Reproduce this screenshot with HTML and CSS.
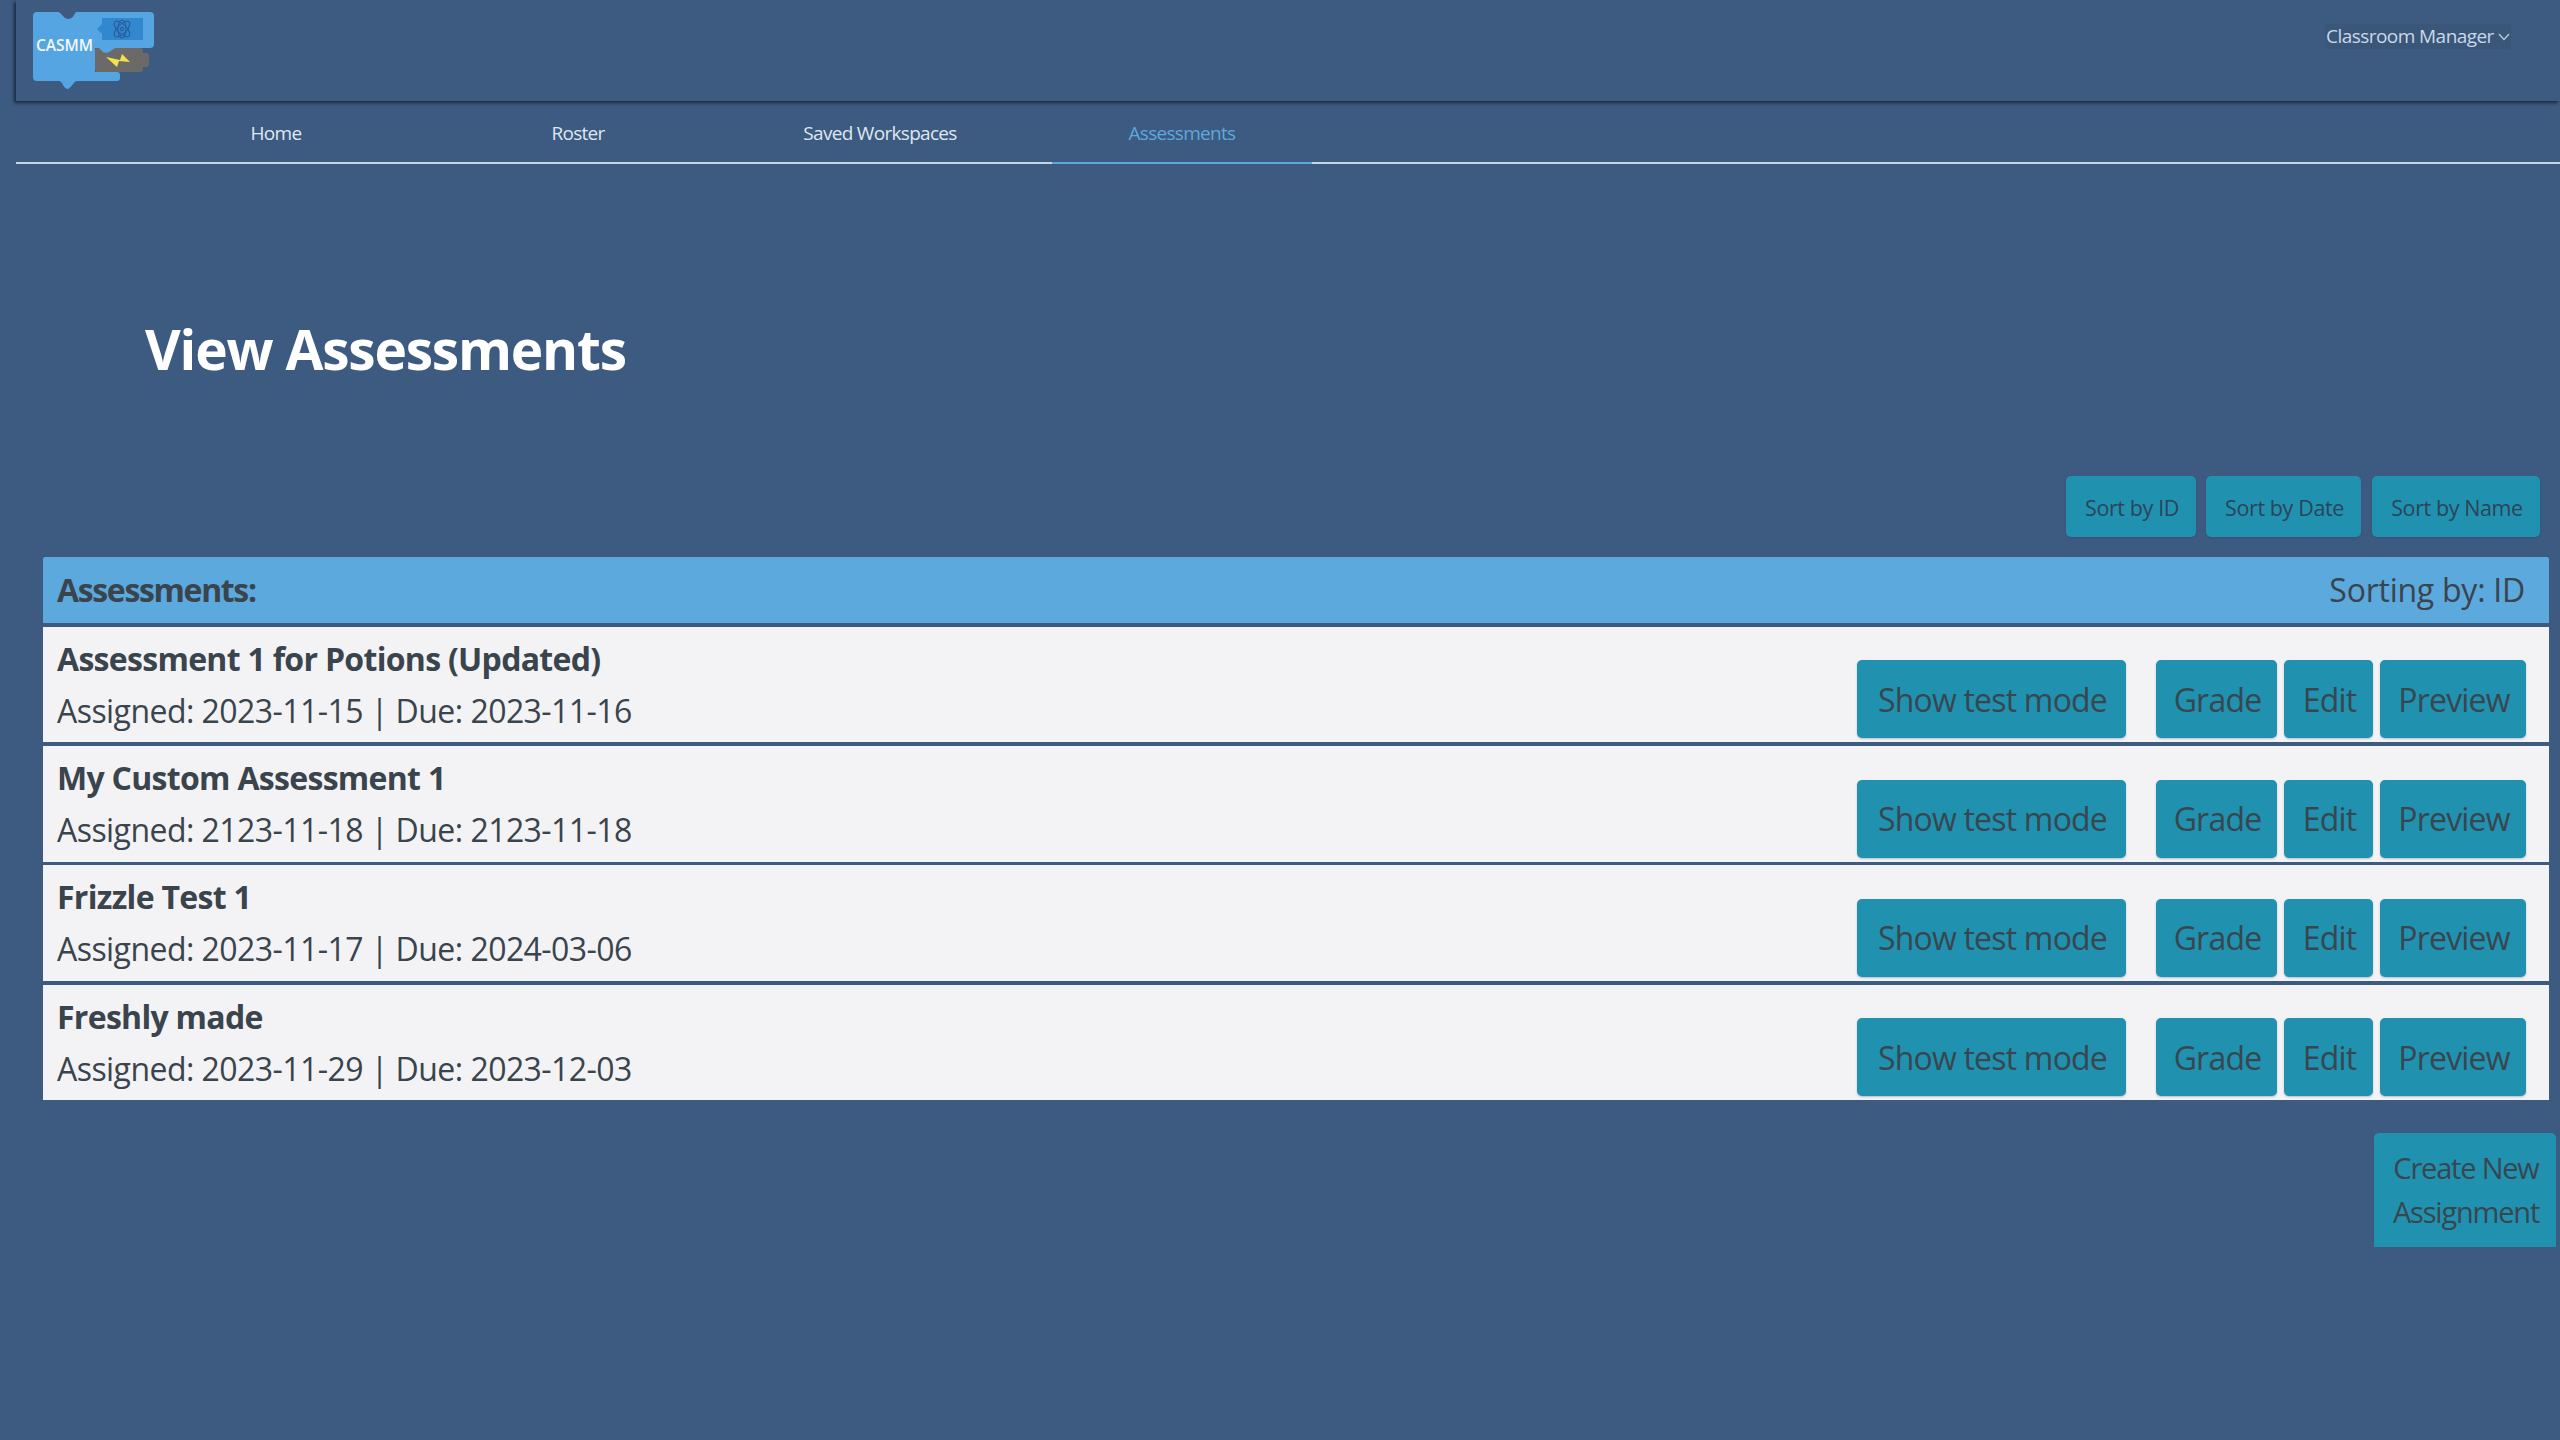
FILE: index.html
```html
<!DOCTYPE html>
<html lang="en">
<head>
<meta charset="utf-8">
<title>View Assessments</title>
<link rel="stylesheet" href="styles.css">
</head>
<body>
<div class="page">
  <header class="topbar">
    <svg class="logo" width="125" height="80" viewBox="33 11 125 80" aria-label="CASMM logo">
      <path class="gray" d="M98 48h42q3 0 3 3v2h3q3 0 3 3v8q0 3-3 3h-3v2q0 3-3 3H98q-3 0-3-3V51q0-3 3-3z"/>
      <path class="blue" d="M37 12h21q2 0 4 3t6 4q4 0 6-4t4-3h72q4 0 4 4v28q0 4-4 4H116q-2 0-4 2t-6 3q-3 0-5-3t-4-2h-2V72H117q3 0 3 3v3q0 3-3 3H77q-2 0-4 3t-5 5q-3 0-5-4t-4-4H37q-4 0-4-4V16q0-4 4-4z"/>
      <path class="inner" d="M102 18h41v22h-41v-6l-5-5 5-5z"/>
      <g class="atom">
        <ellipse cx="122" cy="29" rx="10" ry="4.5" transform="rotate(45 122 29)"/>
        <ellipse cx="122" cy="29" rx="10" ry="4.5" transform="rotate(-45 122 29)"/>
        <ellipse cx="122" cy="29" rx="4" ry="9"/>
        <circle cx="122" cy="29" r="1.6"/>
      </g>
      <path class="bolt" d="M106 57L120 60 122 54 130 62 119 61 117 67z"/>
      <text class="logo-text" x="36" y="50.5">CASMM</text>
    </svg>
    <button class="user-menu" type="button">
      <span>Classroom Manager</span>
      <svg class="chevron" width="12" height="8" viewBox="0 0 12 8"><path d="M1 1l5 5.5L11 1" fill="none" stroke="#b9cbdf" stroke-width="1.3"/></svg>
    </button>
  </header>
  <nav class="tabs">
    <a class="tab">Home</a>
    <a class="tab">Roster</a>
    <a class="tab">Saved Workspaces</a>
    <a class="tab active">Assessments</a>
  </nav>
  <main class="content">
    <h1 class="title">View Assessments</h1>
    <div class="sort-row">
      <button class="btn sort w-id" type="button">Sort by ID</button>
      <button class="btn sort w-date" type="button">Sort by Date</button>
      <button class="btn sort w-name" type="button">Sort by Name</button>
    </div>
    <section class="list">
      <div class="list-head">
        <strong>Assessments:</strong>
        <span>Sorting by: ID</span>
      </div>
      <article class="item">
        <div class="info">
          <h2>Assessment 1 for Potions (Updated)</h2>
          <p>Assigned: 2023-11-15 | Due: 2023-11-16</p>
        </div>
        <div class="actions">
          <button class="btn w-test" type="button">Show test mode</button>
          <button class="btn w-grade" type="button">Grade</button>
          <button class="btn w-edit" type="button">Edit</button>
          <button class="btn w-prev" type="button">Preview</button>
        </div>
      </article>
      <article class="item">
        <div class="info">
          <h2>My Custom Assessment 1</h2>
          <p>Assigned: 2123-11-18 | Due: 2123-11-18</p>
        </div>
        <div class="actions">
          <button class="btn w-test" type="button">Show test mode</button>
          <button class="btn w-grade" type="button">Grade</button>
          <button class="btn w-edit" type="button">Edit</button>
          <button class="btn w-prev" type="button">Preview</button>
        </div>
      </article>
      <article class="item">
        <div class="info">
          <h2>Frizzle Test 1</h2>
          <p>Assigned: 2023-11-17 | Due: 2024-03-06</p>
        </div>
        <div class="actions">
          <button class="btn w-test" type="button">Show test mode</button>
          <button class="btn w-grade" type="button">Grade</button>
          <button class="btn w-edit" type="button">Edit</button>
          <button class="btn w-prev" type="button">Preview</button>
        </div>
      </article>
      <article class="item">
        <div class="info">
          <h2>Freshly made</h2>
          <p>Assigned: 2023-11-29 | Due: 2023-12-03</p>
        </div>
        <div class="actions">
          <button class="btn w-test" type="button">Show test mode</button>
          <button class="btn w-grade" type="button">Grade</button>
          <button class="btn w-edit" type="button">Edit</button>
          <button class="btn w-prev" type="button">Preview</button>
        </div>
      </article>
    </section>
    <div class="create-row">
      <button class="btn create" type="button">Create New<br>Assignment</button>
    </div>
  </main>
</div>
</body>
</html>
```
FILE: styles.css
```css
* { box-sizing: border-box; }
html, body { margin: 0; height: 100%; }
body {
  background: #3d5a80;
  font-family: "Open Sans", "Noto Sans", sans-serif;
  color: #3a444c;
  overflow: hidden;
}
.page { width: 2560px; height: 1440px; }

.topbar {
  margin-left: 16px;
  height: 101px;
  padding: 12px 49px 0 17px;
  display: flex;
  justify-content: space-between;
  align-items: flex-start;
  box-shadow: -2px 2px 3px #1a2b42;
  background: #3d5a80;
}
.logo { display: block; margin-top: -1px; }
.blue { fill: #55a5e3; }
.gray { fill: #6b6a68; }
.inner { fill: #3288cf; }
.atom { fill: none; stroke: #2a5f9f; stroke-width: 1.2; }
.bolt { fill: #f2e34b; }
.logo-text { fill: #f2f7fb; font: 600 15.5px "Open Sans", sans-serif; }

.user-menu {
  margin-top: 12px;
  width: 186px;
  height: 25px;
  padding: 0 1px;
  display: flex;
  align-items: center;
  justify-content: space-between;
  border: 0;
  background: #3a5679;
  color: #c9d8ea;
  font: 19px/25px "Open Sans", sans-serif;
  letter-spacing: -0.55px;
  white-space: nowrap;
}
.chevron { flex-shrink: 0; }

.tabs {
  margin-left: 16px;
  height: 63px;
  padding-left: 130px;
  display: flex;
  gap: 42px;
  border-bottom: 2px solid #c3d6e6;
}
.tab {
  width: 260px;
  height: 63px;
  display: flex;
  align-items: center;
  justify-content: center;
  color: #dfe8f2;
  font-size: 19px;
  letter-spacing: -0.7px;
}
.tab.active {
  padding-top: 2px;
  color: #5ba9dd;
  border-bottom: 2px solid #5ba9dd;
}

.content { padding: 0 4px 0 43px; }
.title {
  margin: 146px 0 0 102px;
  height: 78px;
  color: #fff;
  font-size: 55px;
  line-height: 78px;
  font-weight: 700;
  letter-spacing: -1.2px;
}

.btn {
  border: 0;
  border-radius: 5px;
  padding: 0 0 0 2px;
  background: #2191b0;
  color: #38474f;
  font-family: inherit;
  font-size: 32px;
  letter-spacing: -0.8px;
  box-shadow: 0 1px 2px rgba(40, 70, 90, 0.3);
}

.sort-row {
  margin: 88px 16px 0 0;
  display: flex;
  justify-content: flex-end;
  height: 61px;
}
.sort { padding-top: 2px; font-size: 21.5px; letter-spacing: -0.4px; color: #2a4557; height: 61px; }
.w-id { width: 130px; }
.w-date { width: 155px; margin-left: 10px; }
.w-name { width: 168px; margin-left: 11px; }

.list { margin: 20px 7px 0 0; display: flex; flex-direction: column; gap: 3.7px; }
.list-head {
  height: 66px;
  padding: 0 24px 2px 14px;
  display: flex;
  justify-content: space-between;
  align-items: center;
  background: #5ba9dd;
  border-radius: 2px 2px 0 0;
  font-size: 32px;
  letter-spacing: -0.25px;
}
.list-head strong { font-weight: 700; letter-spacing: -1.35px; }

.item {
  height: 115.6px;
  padding: 0 23px 4px 14px;
  display: flex;
  justify-content: space-between;
  background: #f3f3f6;
}
.info h2 {
  margin: 10px 0 0;
  font-size: 32px;
  line-height: 44px;
  font-weight: 700;
  letter-spacing: -0.7px;
}
.info p {
  margin: 8px 0 0;
  font-size: 32px;
  line-height: 44px;
  letter-spacing: -0.55px;
}
.actions { display: flex; align-items: flex-end; }
.actions .btn { height: 78px; }
.w-test { width: 269px; margin-right: 30px; }
.w-grade { width: 121px; margin-right: 7px; }
.w-edit { width: 89px; margin-right: 7px; }
.w-prev { width: 146px; }

.create-row { display: flex; justify-content: flex-end; margin-top: 33px; }
.create {
  width: 182px;
  height: 114px;
  border-radius: 5px 5px 0 0;
  font-size: 29px;
  line-height: 44px;
  letter-spacing: -1.2px;
  box-shadow: none;
}
```
